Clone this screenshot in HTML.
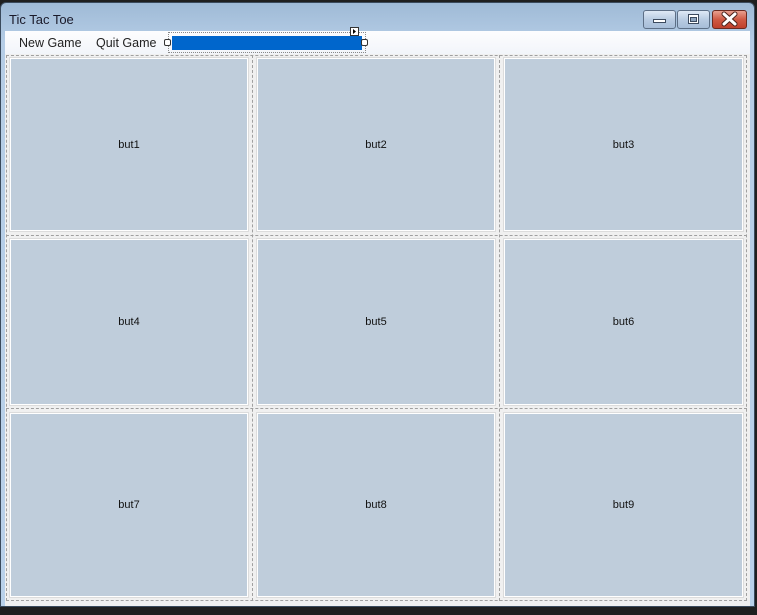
<!DOCTYPE html>
<html><head><meta charset="utf-8"><style>
*{margin:0;padding:0;box-sizing:border-box}
body{width:757px;height:615px;background:#1f1f1f;position:relative;overflow:hidden;font-family:"Liberation Sans",sans-serif}
.abs{position:absolute}
#frame{left:0;top:2px;width:755px;height:605px;background:linear-gradient(#9fbad6,#b5cde6 40px,#b9d1ea);border:1px solid #3a4a5c;border-radius:6px 6px 0 0}
#client{left:5px;top:31px;width:745px;height:575px;background:#f0f0f0}
#menu{left:5px;top:31px;width:745px;height:23px;background:linear-gradient(#fdfdfe,#f2f5fa)}
.t{font-size:12.5px;color:#222}
.cell{background:#bfcddb;border:1px solid #fff;box-shadow:0 0 0 1px #dcdcdc;display:flex;align-items:center;justify-content:center;font-size:11px;color:#111}
.dh{height:0;border-top:1px dashed #a0a0a0}
.dv{width:0;border-left:1px dashed #a0a0a0}
.wb{top:10px;height:19px;border:1px solid #5d6f86;border-radius:3px;background:linear-gradient(#dfe9f5,#b9cce2 50%,#a7bdd8)}
.wb svg{position:absolute;left:0;top:0}
</style></head><body>
<div id="frame" class="abs"></div>
<div class="abs t" style="left:9px;top:12px;color:#1a1a2a;font-size:13px">Tic Tac Toe</div>
<div class="abs wb" style="left:643px;width:33px"><svg width="31" height="17"><rect x="9.5" y="8.5" width="12" height="3" fill="#fff" stroke="#3c4a5e"/></svg></div>
<div class="abs wb" style="left:677px;width:33px"><svg width="31" height="17"><rect x="10.5" y="3.5" width="10" height="9" fill="#fff" stroke="#3c4a5e"/><rect x="12.5" y="6.5" width="6" height="4" fill="#8ea4be" stroke="#3c4a5e"/></svg></div>
<div class="abs wb" style="left:712px;width:35px;border-color:#6b2a20;background:linear-gradient(#e8a090,#cf5a44 50%,#c0402c)"><svg width="33" height="17"><path d="M11 3 L22 13 M22 3 L11 13" stroke="#4a2018" stroke-width="5" stroke-linecap="round"/><path d="M11 3 L22 13 M22 3 L11 13" stroke="#fff" stroke-width="3" stroke-linecap="round"/></svg></div>
<div id="client" class="abs"></div>
<div id="menu" class="abs"></div>
<div class="abs t" style="left:19px;top:36px">New Game</div>
<div class="abs t" style="left:96px;top:36px">Quit Game</div>
<div class="abs" style="left:168px;top:32px;width:198px;height:21px;border:1px dotted #888"></div>
<div class="abs" style="left:172px;top:36px;width:190px;height:14px;background:#0066cc"></div>
<div class="abs" style="left:164px;top:39px;width:7px;height:7px;border:1px solid #333;border-radius:2px;background:#fff"></div>
<div class="abs" style="left:361px;top:39px;width:7px;height:7px;border:1px solid #333;border-radius:2px;background:#fff"></div>
<div class="abs" style="left:350px;top:27px;width:9px;height:9px;border:1px solid #333;background:#fff"><svg width="7" height="7" style="position:absolute;left:0;top:0"><path d="M2 1 L5 3.5 L2 6 Z" fill="#000"/></svg></div>

<div class="abs" style="left:6px;top:55px;width:741px;height:546px;border:1px dashed #a0a0a0"></div>
<div class="abs dv" style="left:252px;top:55px;height:546px"></div>
<div class="abs dv" style="left:499px;top:55px;height:546px"></div>
<div class="abs dh" style="left:6px;top:235px;width:741px"></div>
<div class="abs dh" style="left:6px;top:408px;width:741px"></div>

<div class="abs cell" style="left:10px;top:58px;width:238px;height:173px">but1</div>
<div class="abs cell" style="left:257px;top:58px;width:238px;height:173px">but2</div>
<div class="abs cell" style="left:504px;top:58px;width:239px;height:173px">but3</div>
<div class="abs cell" style="left:10px;top:239px;width:238px;height:166px">but4</div>
<div class="abs cell" style="left:257px;top:239px;width:238px;height:166px">but5</div>
<div class="abs cell" style="left:504px;top:239px;width:239px;height:166px">but6</div>
<div class="abs cell" style="left:10px;top:413px;width:238px;height:184px">but7</div>
<div class="abs cell" style="left:257px;top:413px;width:238px;height:184px">but8</div>
<div class="abs cell" style="left:504px;top:413px;width:239px;height:184px">but9</div>
</body></html>
